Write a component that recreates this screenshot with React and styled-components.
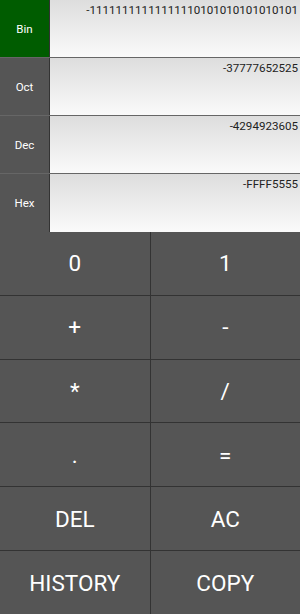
import React from 'react';
import styled, { createGlobalStyle } from 'styled-components';

const GlobalStyle = createGlobalStyle`
  html, body {
    margin: 0;
    padding: 0;
    background: #555555;
  }
  body {
    font-family: Roboto, "Liberation Sans", sans-serif;
  }
`;

const Screen = styled.div`
  display: flex;
  flex-direction: column;
  height: 614px;
  width: 300px;
  overflow: hidden;
  background: #555555;
`;

const Display = styled.div`
  display: flex;
  flex-direction: column;
`;

const BaseRow = styled.div`
  display: flex;
  height: 58px;
  border-bottom: 1px solid #666666;
  box-sizing: border-box;

  &:last-of-type {
    border-bottom: none;
  }
`;

const BaseLabel = styled.div`
  align-items: center;
  background: ${({ active }) => (active ? '#005c00' : '#555555')};
  border-right: 1px solid #333333;
  color: #ffffff;
  display: flex;
  font-size: 11.5px;
  justify-content: center;
  width: 50px;
  box-sizing: border-box;
`;

const Value = styled.div`
  background: linear-gradient(#dddddd, #fafafa);
  color: #222222;
  flex: 1;
  font-size: 11.6px;
  padding: 3px 2px 0 0;
  text-align: right;
  white-space: nowrap;
  overflow: hidden;
`;

const Keypad = styled.div`
  display: grid;
  flex: 1;
  grid-template-columns: 1fr 1fr;
  grid-template-rows: repeat(6, 1fr);
  background: #333333;
  gap: 1px;
`;

const Key = styled.button`
  align-items: center;
  background: #555555;
  border: none;
  color: #ffffff;
  display: flex;
  font-family: Roboto, "Liberation Sans", sans-serif;
  font-size: 22.5px;
  justify-content: center;
  margin: 0;
  padding: 0;
`;

const bases = [
  { name: 'Bin', value: '-11111111111111110101010101010101' },
  { name: 'Oct', value: '-37777652525' },
  { name: 'Dec', value: '-4294923605' },
  { name: 'Hex', value: '-FFFF5555' },
];

const keys = ['0', '1', '+', '-', '*', '/', '.', '=', 'DEL', 'AC', 'HISTORY', 'COPY'];

export default function App() {
  return (
    <>
      <GlobalStyle />
      <Screen>
        <Display>
          {bases.map((b, i) => (
            <BaseRow key={b.name}>
              <BaseLabel active={i === 0}>{b.name}</BaseLabel>
              <Value>{b.value}</Value>
            </BaseRow>
          ))}
        </Display>
        <Keypad>
          {keys.map((k) => (
            <Key key={k}>{k}</Key>
          ))}
        </Keypad>
      </Screen>
    </>
  );
}
